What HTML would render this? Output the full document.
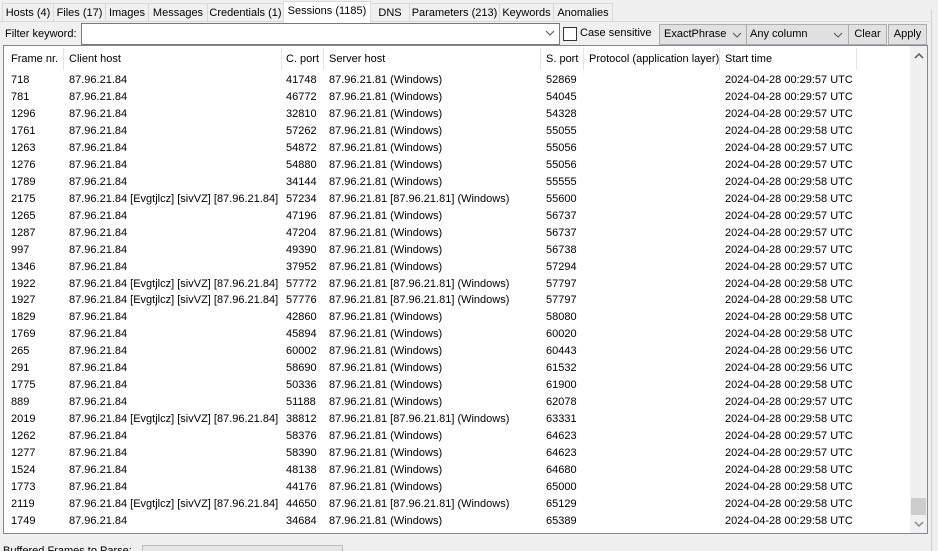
<!DOCTYPE html><html><head><style>
html,body{margin:0;width:938px;height:551px;overflow:hidden}
body{background:#f0f0f0;font-family:"Liberation Sans",Arial,sans-serif;font-size:11px;color:#000;position:relative}
.a{position:absolute;white-space:nowrap}
.tab{position:absolute;top:3px;height:18px;border:1px solid #d9d9d9;border-bottom:none;background:#f0f0f0;line-height:18px;text-align:center;font-size:11px;white-space:nowrap}
.box{position:absolute;background:#e1e1e1;border:1px solid #adadad;line-height:19px;height:19px;top:24px}
#t{position:absolute;left:3px;top:45px;width:923px;height:487px;background:#fff;border:1px solid #828790}
.hd{position:absolute;top:0;height:26px;line-height:26px}
.sep{position:absolute;top:2px;width:1px;height:22px;background:#e5e5e5}
.r{position:absolute;left:0;height:17px;line-height:17px;width:900px}
.r span{position:absolute}
</style></head><body>
<div class="tab" style="left:2px;width:50px">Hosts (4)</div>
<div class="tab" style="left:53px;width:51px">Files (17)</div>
<div class="tab" style="left:105px;width:42px">Images</div>
<div class="tab" style="left:148px;width:58px">Messages</div>
<div class="tab" style="left:207px;width:75px">Credentials (1)</div>
<div class="tab" style="left:283px;width:86px;top:1px;height:21px;background:#fff;z-index:2">Sessions (1185)</div>
<div class="tab" style="left:370px;width:38px">DNS</div>
<div class="tab" style="left:409px;width:89px">Parameters (213)</div>
<div class="tab" style="left:499px;width:53px">Keywords</div>
<div class="tab" style="left:553px;width:58px">Anomalies</div>
<div style="position:absolute;left:0;top:21px;width:930px;height:1px;background:#d9d9d9"></div>
<div style="position:absolute;left:931px;top:10px;width:1px;height:541px;background:#d0d0d0"></div>
<div class="a" style="left:5px;top:28px">Filter keyword:</div>
<div style="position:absolute;left:81px;top:23px;width:477px;height:20px;background:#fff;border:1px solid #7a7a7a"></div>
<svg class="a" style="left:545px;top:30px" width="10" height="7"><path d="M1 1l4 4 4-4" fill="none" stroke="#555"/></svg>
<div style="position:absolute;left:563px;top:27px;width:12px;height:12px;border:1px solid #333;background:#fff"></div>
<div class="a" style="left:580px;top:27px">Case sensitive</div>
<div class="box" style="left:659px;width:85px;padding-left:4px">ExactPhrase<svg class="a" style="left:72px;top:7px" width="10" height="7"><path d="M1 1l4 4 4-4" fill="none" stroke="#555"/></svg></div>
<div class="box" style="left:746px;width:98px;padding-left:3px">Any column<svg class="a" style="left:86px;top:7px" width="10" height="7"><path d="M1 1l4 4 4-4" fill="none" stroke="#555"/></svg></div>
<div class="box" style="left:848px;width:37px;text-align:center">Clear</div>
<div class="box" style="left:888px;width:37px;text-align:center">Apply</div>
<div id="t">
<div class="hd" style="left:7px">Frame nr.</div><div class="sep" style="left:59px"></div>
<div class="hd" style="left:65px">Client host</div><div class="sep" style="left:277px"></div>
<div class="hd" style="left:282px">C. port</div><div class="sep" style="left:319px"></div>
<div class="hd" style="left:325px">Server host</div><div class="sep" style="left:536px"></div>
<div class="hd" style="left:542px">S. port</div><div class="sep" style="left:579px"></div>
<div class="hd" style="left:585px">Protocol (application layer)</div><div class="sep" style="left:715px"></div>
<div class="hd" style="left:721px">Start time</div><div class="sep" style="left:852px"></div>
<div style="position:absolute;left:906px;top:0;width:17px;height:487px;background:#f0f0f0"></div>
<svg class="a" style="left:910px;top:6px" width="10" height="7"><path d="M1 6l4-4 4 4" fill="none" stroke="#555" stroke-width="1.5"/></svg>
<svg class="a" style="left:910px;top:475px" width="10" height="7"><path d="M1 1l4 4 4-4" fill="none" stroke="#888" stroke-width="1.5"/></svg>
<div style="position:absolute;left:907px;top:452px;width:15px;height:17px;background:#cdcdcd"></div>
<div id="rows"></div>
</div>
<div class="a" style="left:3px;top:545px">Buffered Frames to Parse:</div>
<div style="position:absolute;left:142px;top:545px;width:199px;height:10px;background:#e6e6e6;border:1px solid #bcbcbc"></div>
<script>
var d=[["718","",41748,"",52869,57],["781","",46772,"",54045,57],["1296","",32810,"",54328,57],["1761","",57262,"",55055,58],["1263","",54872,"",55056,57],["1276","",54880,"",55056,57],["1789","",34144,"",55555,58],["2175","E",57234,"E",55600,58],["1265","",47196,"",56737,57],["1287","",47204,"",56737,57],["997","",49390,"",56738,57],["1346","",37952,"",57294,57],["1922","E",57772,"E",57797,58],["1927","E",57776,"E",57797,58],["1829","",42860,"",58080,58],["1769","",45894,"",60020,58],["265","",60002,"",60443,56],["291","",58690,"",61532,56],["1775","",50336,"",61900,58],["889","",51188,"",62078,57],["2019","E",38812,"E",63331,58],["1262","",58376,"",64623,57],["1277","",58390,"",64623,57],["1524","",48138,"",64680,58],["1773","",44176,"",65000,58],["2119","E",44650,"E",65129,58],["1749","",34684,"",65389,58]];
var h="";d.forEach(function(r,i){h+='<div class="r" style="top:'+(26+i*16.96)+'px"><span style="left:7px">'+r[0]+'</span><span style="left:65px">87.96.21.84'+(r[1]?' [Evgtjlcz] [sivVZ] [87.96.21.84]':'')+'</span><span style="left:282px">'+r[2]+'</span><span style="left:325px">87.96.21.81 '+(r[3]?'[87.96.21.81] ':'')+'(Windows)</span><span style="left:542px">'+r[4]+'</span><span style="left:721px">2024-04-28 00:29:'+r[5]+' UTC</span></div>'});
document.getElementById("rows").innerHTML=h;
</script>
</body></html>
